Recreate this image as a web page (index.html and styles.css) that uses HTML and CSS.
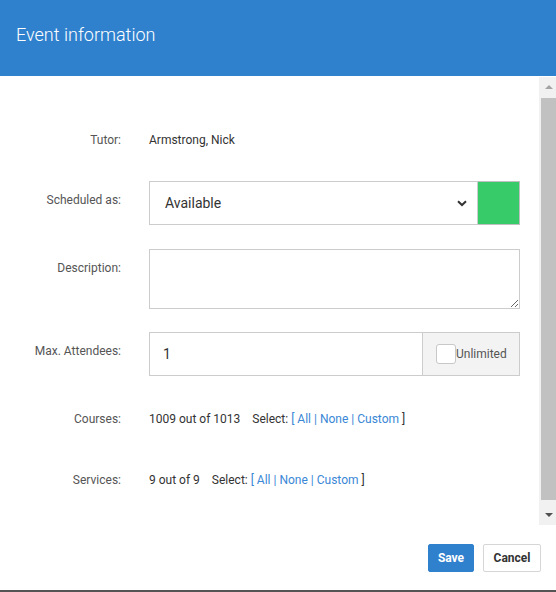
FILE: index.html
```html
<!DOCTYPE html>
<html>
<head>
<meta charset="utf-8">
<link rel="stylesheet" href="styles.css">
</head>
<body>
<div class="dialog">
  <header class="head"><h1 class="title">Event information</h1></header>
  <div class="scroller">
    <div class="content">
      <div class="row row-text row-tutor">
        <div class="label">Tutor:</div>
        <div class="value">Armstrong, Nick</div>
      </div>
      <div class="row row-field row-sched">
        <div class="label">Scheduled as:</div>
        <div class="field select-group">
          <div class="select">
            <span class="select-text">Available</span>
            <svg class="chev" width="10" height="7" viewBox="0 0 10 7"><path d="M1 1.2 L5 5 L9 1.2" fill="none" stroke="#333" stroke-width="2"/></svg>
          </div>
          <div class="swatch"></div>
        </div>
      </div>
      <div class="row row-field row-desc">
        <div class="label">Description:</div>
        <div class="field"><textarea class="textarea"></textarea></div>
      </div>
      <div class="row row-field row-max">
        <div class="label">Max. Attendees:</div>
        <div class="field input-group">
          <div class="input">1</div>
          <div class="addon"><span class="check"></span><span class="addon-text">Unlimited</span></div>
        </div>
      </div>
      <div class="row row-text row-courses">
        <div class="label">Courses:</div>
        <div class="value">1009 out of 1013<span class="select-links">Select: <span class="br">[</span> <a class="lnk">All</a> <span class="pipe">|</span> <a class="lnk">None</a> <span class="pipe">|</span> <a class="lnk">Custom</a> <span class="brc">]</span></span></div>
      </div>
      <div class="row row-text row-services">
        <div class="label">Services:</div>
        <div class="value">9 out of 9<span class="select-links">Select: <span class="br">[</span> <a class="lnk">All</a> <span class="pipe">|</span> <a class="lnk">None</a> <span class="pipe">|</span> <a class="lnk">Custom</a> <span class="brc">]</span></span></div>
      </div>
    </div>
    <div class="scrollbar">
      <div class="sb-btn"><span class="tri-up"></span></div>
      <div class="sb-track"><div class="sb-thumb"></div></div>
      <div class="sb-btn"><span class="tri-down"></span></div>
    </div>
  </div>
  <footer class="foot">
    <button class="btn btn-save">Save</button>
    <button class="btn btn-cancel">Cancel</button>
  </footer>
</div>
</body>
</html>
```

FILE: styles.css
```css
* { box-sizing: border-box; }
html, body { margin: 0; padding: 0; background: #fff; }
body { font-family: Roboto, "Liberation Sans", sans-serif; width: 556px; height: 592px; overflow: hidden; }
.dialog { display: flex; flex-direction: column; height: 592px; border-bottom: 2px solid #555; }
.head { height: 76px; background: #2f81ce; padding: 23px 16px 0; flex: none; }
.title { margin: 0; font-size: 18px; line-height: 24px; font-weight: 300; color: #fff; }
.scroller { display: flex; height: 448px; margin-top: 1px; flex: none; }
.content { flex: 1; padding-top: 55px; }
.scrollbar { width: 17px; background: #f1f1f1; display: flex; flex-direction: column; flex: none; }
.sb-btn { height: 20px; display: flex; align-items: center; justify-content: center; padding-left: 2px; }
.tri-up { width: 0; height: 0; border-left: 4px solid transparent; border-right: 4px solid transparent; border-bottom: 4px solid #a3a3a3; }
.tri-down { width: 0; height: 0; border-left: 4px solid transparent; border-right: 4px solid transparent; border-top: 4px solid #505050; }
.sb-track { flex: 1; padding: 1px 0 0 2px; }
.sb-thumb { height: 402px; background: #c1c1c1; }
.row { display: flex; align-items: flex-start; }
.label { width: 121px; text-align: right; font-size: 12px; line-height: 16px; color: #555; flex: none; }
.value { margin-left: 28px; font-size: 12px; line-height: 16px; color: #333; }
.field { margin-left: 28px; width: 371px; }
.row-field .label { padding-top: 11px; }
.row-sched { margin-top: 33px; }
.row-desc { margin-top: 24px; }
.row-max { margin-top: 23px; }
.row-courses { margin-top: 35px; }
.row-services { margin-top: 45px; }
.select-group { display: flex; height: 44px; }
.select { flex: 1; border: 1px solid #ccc; display: flex; align-items: center; justify-content: space-between; padding: 0 10px 0 15px; font-size: 14px; color: #333; }
.chev { margin-top: 1px; }
.swatch { width: 42px; background: #38cb69; border: 1px solid #bfbfbf; border-left: none; }
.textarea { display: block; width: 371px; height: 60px; border: 1px solid #ccc; margin: 0; padding: 6px 12px; font-family: inherit; font-size: 14px; outline: none; }
.input-group { display: flex; height: 44px; }
.input { flex: 1; border: 1px solid #ccc; display: flex; align-items: center; padding-left: 13px; font-size: 14px; color: #333; }
.addon { width: 97px; border: 1px solid #ccc; border-left: none; background: #f3f3f3; display: flex; align-items: center; padding-left: 13px; }
.check { width: 20px; height: 20px; border: 1px solid #c8c8c8; border-radius: 3px; background: #fff; flex: none; }
.addon-text { font-size: 12px; color: #555; }
.select-links { margin-left: 12px; }
.br { color: #3a87d6; }
.brc { color: #333; }
.pipe { color: #3a87d6; }
.lnk { color: #3a87d6; text-decoration: none; }
.foot { flex: 1; display: flex; justify-content: flex-end; align-items: flex-start; padding: 19px 15px 0 0; gap: 9px; }
.btn { height: 28px; font-family: inherit; font-size: 12px; font-weight: 700; border-radius: 2px; cursor: pointer; }
.btn-save { width: 46px; background: #2f81ce; color: #fff; border: 1px solid #2f81ce; }
.btn-cancel { width: 58px; background: #fff; color: #333; border: 1px solid #d6d6d6; }
```
